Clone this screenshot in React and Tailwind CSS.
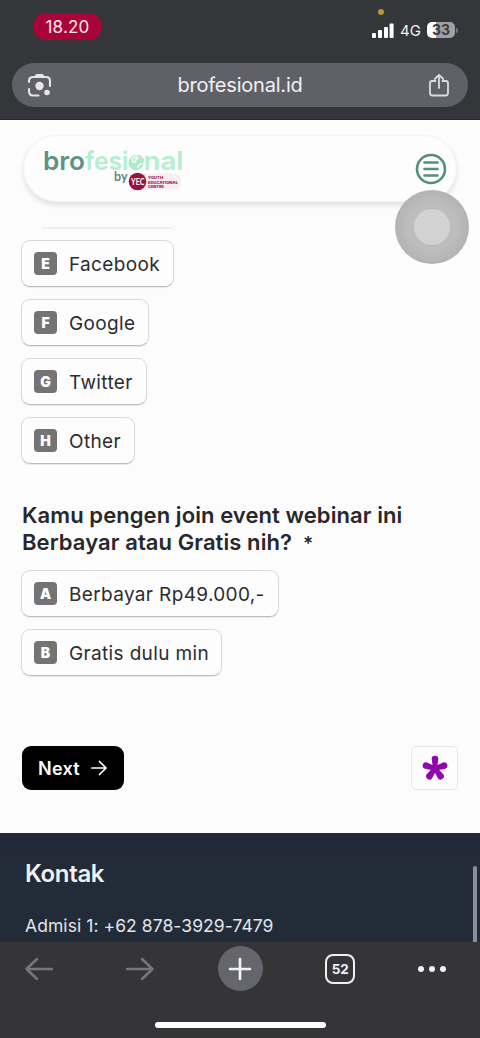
import React from "react";

const sources = [
  { key: "E", label: "Facebook", width: "w-[153px]" },
  { key: "F", label: "Google", width: "w-[128px]" },
  { key: "G", label: "Twitter", width: "w-[126px]" },
  { key: "H", label: "Other", width: "w-[114px]" },
];

const tickets = [
  { key: "A", label: "Berbayar Rp49.000,-", width: "w-[258px]" },
  { key: "B", label: "Gratis dulu min", width: "w-[201px]" },
];

const StatusBar = () => (
  <div className="relative flex h-[63px] items-start justify-between pl-[33px] pr-[22px]">
    <div className="mt-[13px] flex h-[27px] w-[69px] items-center justify-center rounded-full bg-[#a90339] pt-0.5 text-[17px] tracking-[0.2px] text-[#fce8ee]">
      18.20
    </div>
    <div className="absolute left-[378px] top-[9px] h-1.5 w-1.5 rounded-full bg-[#b5972f]" />
    <div className="mt-[22px] flex h-4 items-center">
      <svg width="22" height="15" viewBox="0 0 22 15" fill="#fff">
        <rect x="0" y="10" width="4" height="5" rx="1" />
        <rect x="6" y="7" width="4" height="8" rx="1" />
        <rect x="12" y="4" width="4" height="11" rx="1" />
        <rect x="17.6" y="0.5" width="4" height="14.5" rx="1" />
      </svg>
      <span className="ml-1.5 w-[27px] pt-0.5 text-[15px] text-[#f0f0f2]">4G</span>
      <div className="flex h-4 w-7 items-center justify-center rounded-[5px] bg-linear-to-r from-white from-33% to-[#a0a0a3] to-33% text-[14px] font-bold leading-none text-[#3b3b3f]">
        33
      </div>
      <div className="ml-px h-[5px] w-[2px] rounded-r bg-[#77777b]" />
    </div>
  </div>
);

const AddressBar = () => (
  <div className="mx-3 flex h-11 items-center justify-between rounded-full bg-[#606168] pl-[15px] pr-[18px]">
    <svg width="25" height="25" viewBox="0 0 25 25" fill="none" stroke="#e6e6ea" strokeWidth="2.1" strokeLinecap="round">
      <path d="M2 9V8q0-4 4-4h13q4 0 4 4v5M2 16v2q0 4.500 4 4.500h5.500" />
      <path d="M8 3.500 9.200 1.500h6.600L17 3.500z" fill="#e6e6ea" strokeWidth="1" />
      <circle cx="12.500" cy="13" r="4.200" fill="#e6e6ea" stroke="none" />
      <circle cx="20" cy="19.500" r="2.800" fill="#e6e6ea" stroke="none" />
    </svg>
    <span className="text-[20px] tracking-[-0.2px] text-[#f1f1f4]">brofesional.id</span>
    <svg width="22" height="24" viewBox="0 0 22 24" fill="none" stroke="#dcdce2" strokeWidth="1.8" strokeLinecap="round" strokeLinejoin="round">
      <path d="M7.500 8H4Q2 8 2 10v10q0 2.500 2.500 2.500h13q2.500 0 2.500-2.500V10q0-2-2-2h-3.500" />
      <path d="M11 15V2M6.800 6 11 1.800 15.200 6" />
    </svg>
  </div>
);

const Logo = () => (
  <svg className="overflow-visible" width="142" height="46" viewBox="0 0 142 46" role="img">
    <g fontFamily="Inter, sans-serif" fontWeight="600" fontSize="25.500">
      <text x="-1" y="23" textLength="42" lengthAdjust="spacingAndGlyphs" fill="#5c9384">bro</text>
      <text x="41" y="23" textLength="43.500" lengthAdjust="spacingAndGlyphs" fill="#b4efcf">fesi</text>
      <text x="99.500" y="23" textLength="40" lengthAdjust="spacingAndGlyphs" fill="#b4efcf">nal</text>
    </g>
    <circle cx="92" cy="15.800" r="7.500" fill="#aeecc9" />
    <path d="M88 12.500q3-4 6-1.500-3 1-2.500 4-2 1-3.500-2.500M93.500 20.500q1-3 4.500-4" fill="none" stroke="#f4fdf8" strokeWidth="1.500" />
    <path d="M94 8q5 1 6 6.500" fill="none" stroke="#b0b8ae" strokeWidth="0.700" />
    <text x="70" y="34" fontFamily="Lato, sans-serif" fontWeight="700" fontSize="12.500" fill="#64877f">by</text>
    <rect x="90" y="26.500" width="47" height="16" rx="6" fill="#f8edf2" />
    <circle cx="93.500" cy="34.500" r="8.800" fill="#9b1238" />
    <text x="87" y="38" textLength="13.500" lengthAdjust="spacingAndGlyphs" fontFamily="Lato, sans-serif" fontWeight="700" fontSize="10" fill="#fff">YEC</text>
    <g fontFamily="Inter, sans-serif" fontWeight="800" fontSize="4" fill="#912047">
      <text x="104" y="32" textLength="15" lengthAdjust="spacingAndGlyphs">YOUTH</text>
      <text x="104" y="36.500" textLength="30" lengthAdjust="spacingAndGlyphs">EDUCATIONAL</text>
      <text x="104" y="41" textLength="16" lengthAdjust="spacingAndGlyphs">CENTRE</text>
    </g>
  </svg>
);

const SiteHeader = () => (
  <header className="relative mx-[23px] mt-[15px] flex h-[67px] items-start justify-between rounded-full border border-[#f3f3f5] bg-[#fdfdfe] pl-5 pr-[9px] shadow-[0_3px_5px_rgba(40,40,60,0.13)]">
    <div className="mt-[11px]">
      <Logo />
    </div>
    <svg className="mt-[17px]" width="32" height="32" viewBox="0 0 32 32" fill="none" stroke="#548e7e" strokeWidth="2.6" strokeLinecap="round">
      <circle cx="16" cy="16" r="14" />
      <path d="M9.500 9.500h13M9.500 16h13M9.500 22.500h13" />
    </svg>
    <div className="absolute left-[371px] top-[54px] flex h-[74px] w-[74px] items-center justify-center rounded-full bg-[radial-gradient(circle,#bdbdbe_45%,#b3b3b4_70%)]">
      <div className="h-9 w-9 rounded-full bg-[#d2d2d3]" />
    </div>
  </header>
);

const Options = ({ items }) => (
  <div className="flex flex-col items-start gap-3">
    {items.map((item) => (
      <div
        key={item.key}
        className={`${item.width} flex h-[47px] items-center whitespace-nowrap rounded-[9px] border border-[#d9d9db] border-b-[#bcbcbf] bg-[#fdfdfe] pl-[12px] shadow-[0_1px_1px_rgba(0,0,0,0.08)]`}
      >
        <span className="flex h-[23px] w-[23px] items-center justify-center rounded-[4px] bg-[#747474] text-[14px] font-black leading-none text-white">
          {item.key}
        </span>
        <span className="ml-3 pt-[3px] text-[19px] tracking-[0.35px] text-[#2c2c2f]">{item.label}</span>
      </div>
    ))}
  </div>
);

const FormFooter = () => (
  <div className="mt-[70px] flex items-center justify-between pr-[22px]">
    <button className="ml-px flex h-11 w-[102px] items-center justify-between rounded-[9px] bg-black pl-4 pr-[17px] text-[18px] font-semibold tracking-[0.3px] text-white">
      Next
      <svg width="16" height="16" viewBox="0 0 16 16" fill="none" stroke="currentColor" strokeWidth="1.7" strokeLinecap="round" strokeLinejoin="round">
        <path d="M1 8h14M8.500 1.500 15 8l-6.500 6.500" />
      </svg>
    </button>
    <div className="flex h-11 w-[47px] items-center justify-center rounded-[5px] border border-[#e7e7ea] bg-[#fdfdfe]">
      <svg width="26" height="26" viewBox="-13 -13.500 26 26" fill="#9403b0">
        {[0, 72, 144, 216, 288].map((angle) => (
          <path key={angle} transform={`rotate(${angle})`} d="M-2 0-3.300-9.500Q-3.400-12.800 0-12.800T3.300-9.500L2 0z" />
        ))}
        <circle r="3.500" />
      </svg>
    </div>
  </div>
);

const Toolbar = () => (
  <footer className="relative h-24 bg-[#353538]">
    <div className="flex items-start justify-between pl-[25px] pr-[34px] pt-1">
      <svg className="mt-[11px]" width="28" height="24" viewBox="0 0 28 24" fill="none" stroke="#77777a" strokeWidth="2.5" strokeLinecap="round" strokeLinejoin="round">
        <path d="M27 12H1.500M12 2 1.500 12 12 22" />
      </svg>
      <svg className="ml-[38px] mt-[11px]" width="28" height="24" viewBox="0 0 28 24" fill="none" stroke="#77777a" strokeWidth="2.5" strokeLinecap="round" strokeLinejoin="round">
        <path d="M1 12h25.500M16 2l10.500 10L16 22" />
      </svg>
      <div className="ml-[29px] flex h-[45px] w-[45px] items-center justify-center rounded-full bg-[#65666b]">
        <svg width="24" height="24" viewBox="0 0 24 24" stroke="#f2f2f5" strokeWidth="2.7" strokeLinecap="round">
          <path d="M12 2v20M2 12h20" />
        </svg>
      </div>
      <div className="ml-[28px] mt-2 flex h-[30px] w-[30px] items-center justify-center rounded-[8px] border-[2.5px] border-[#f0f0f3] pt-px text-[13.500px] font-bold text-[#f0f0f3]">
        52
      </div>
      <div className="ml-[28px] mt-5 flex gap-[5px]">
        <span className="h-1.5 w-1.5 rounded-full bg-[#f0f0f3]" />
        <span className="h-1.5 w-1.5 rounded-full bg-[#f0f0f3]" />
        <span className="h-1.5 w-1.5 rounded-full bg-[#f0f0f3]" />
      </div>
    </div>
    <div className="absolute bottom-[10px] left-[155px] h-1.5 w-[171px] rounded-full bg-white" />
  </footer>
);

const App = () => {
  return (
    <div className="flex h-[1038px] w-[480px] flex-col overflow-hidden bg-[#fcfcfd] font-['Inter',sans-serif]">
      <div className="h-[120px] shrink-0 border-b border-[#29292c] bg-[#35363a]">
        <StatusBar />
        <AddressBar />
      </div>

      <main className="flex h-[713px] shrink-0 flex-col">
        <SiteHeader />
        <div className="ml-[21px] mt-[25px]">
          <div className="ml-[22px] h-[3px] w-[130px] rounded-tr border-t-2 border-[#efeff1]" />
          <div className="mt-[10px]">
            <Options items={sources} />
          </div>
          <h2 className="mb-[13px] mt-[38px] whitespace-nowrap text-[22px] font-semibold leading-[27px] tracking-[0.08px] text-[#28282b]">
            <span className="ml-px">Kamu pengen join event webinar ini</span>
            <br />
            <span className="ml-px">Berbayar atau Gratis nih?</span>
            <span className="ml-[11px] text-[19px]">*</span>
          </h2>
          <Options items={tickets} />
          <FormFooter />
        </div>
      </main>

      <section className="relative h-[109px] shrink-0 bg-linear-to-b from-[#24263a] to-[#222b38] to-20% pl-[25px] pt-[25px] text-[#f0f1f5]">
        <h3 className="text-[24px] font-semibold leading-8 tracking-[-0.35px]">Kontak</h3>
        <p className="mt-[24px] whitespace-nowrap text-[17.500px] leading-6 tracking-[0.07px] text-[#e2e5eb]">Admisi 1: +62 878-3929-7479</p>
        <div className="absolute bottom-0 right-[3px] h-[76px] w-1 rounded-t-full bg-[#898d9c]" />
      </section>
      <Toolbar />
    </div>
  );
};

export default App;
